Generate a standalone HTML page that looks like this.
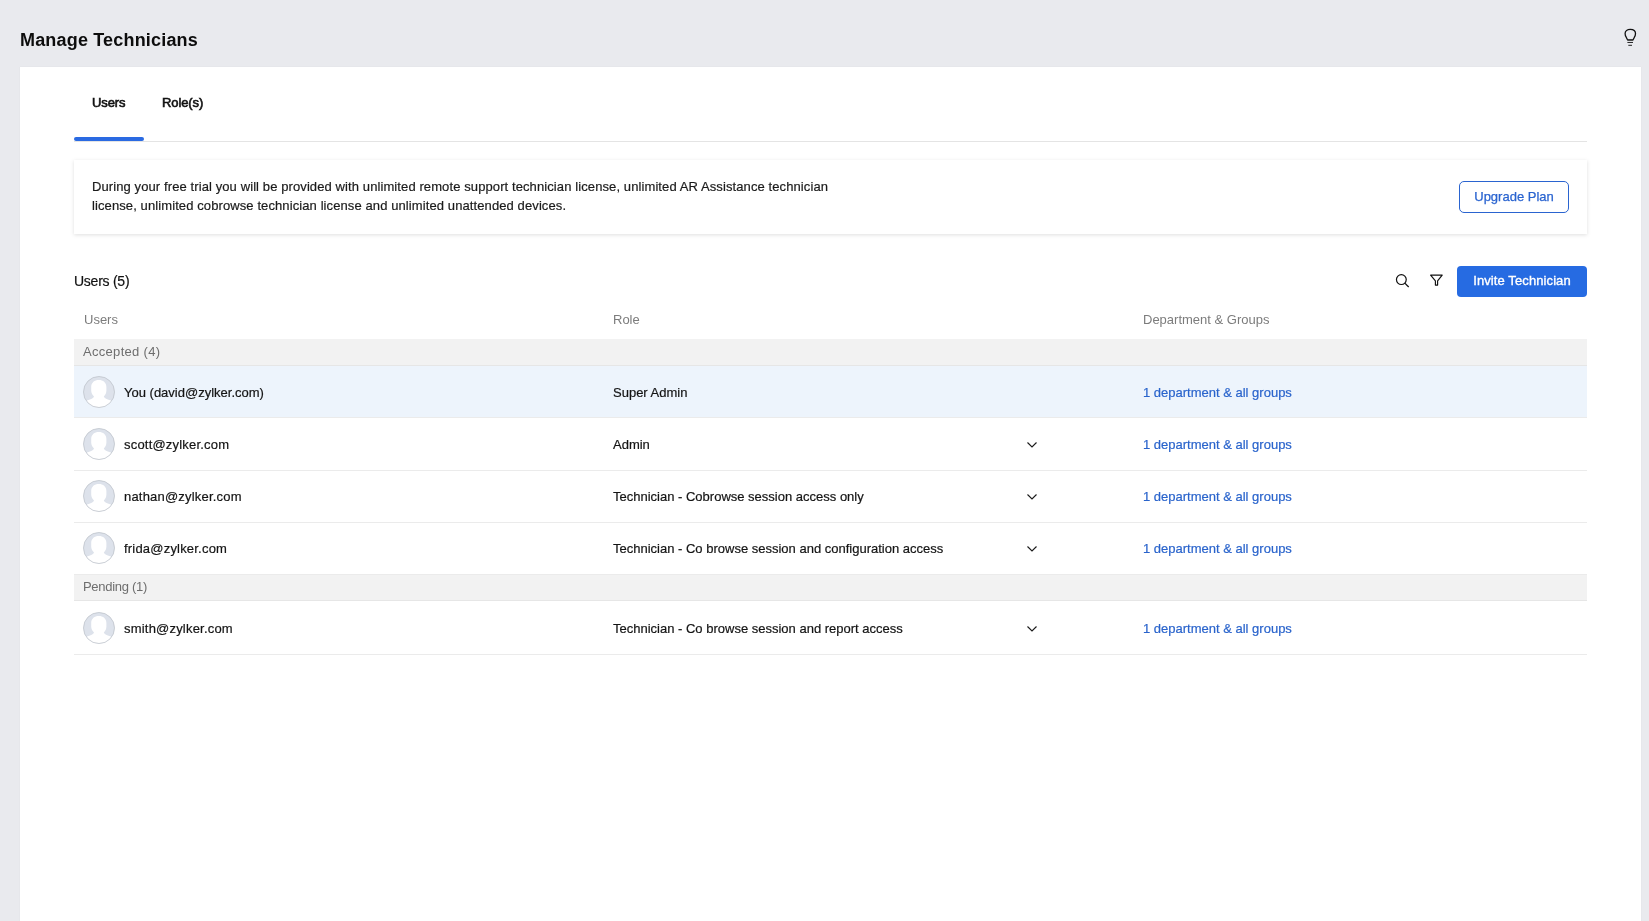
<!DOCTYPE html>
<html><head><meta charset="utf-8">
<style>
*{box-sizing:border-box;margin:0;padding:0}
html,body{width:1649px;height:921px;overflow:hidden}
body{background:#e9eaee;font-family:"Liberation Sans",sans-serif;color:#1b1b1b;position:relative}
.row .u,.row .r,.row .d,.info p{-webkit-text-stroke:0.2px currentColor}
.abs{position:absolute;white-space:nowrap}
.title{left:20px;top:30px;font-size:18px;font-weight:bold;color:#0d0d0d;line-height:20px;letter-spacing:0.18px}
.panel{position:absolute;left:20px;top:67px;width:1621px;height:870px;background:#fff;box-shadow:0 0 1px rgba(0,0,0,0.07)}
.tab{font-size:13px;line-height:16px;color:#111;letter-spacing:-0.1px;-webkit-text-stroke:0.6px #111}
.tabbar{left:74px;top:137px;width:70px;height:4px;border-radius:2px;background:#2a6ae2}
.tabline{left:74px;top:141px;width:1513px;height:1px;background:#e4e4e4}
.info{position:absolute;left:74px;top:160px;width:1513px;height:74px;background:#fff;box-shadow:0 1px 4px rgba(0,0,0,0.13)}
.info p{position:absolute;left:18px;top:17px;font-size:13px;line-height:19px;color:#1b1b1b;letter-spacing:0.1px}
.btn-out{position:absolute;left:1459px;top:181px;width:110px;height:32px;border:1px solid #2a64d0;border-radius:5px;color:#2a64d0;font-size:13px;line-height:30px;text-align:center;-webkit-text-stroke:0.25px #2a64d0}
.usersct{left:74px;top:273px;font-size:14px;line-height:16px;color:#111;-webkit-text-stroke:0.2px #111;letter-spacing:-0.25px}
.btn{position:absolute;left:1457px;top:266px;width:130px;height:31px;border-radius:4px;background:#266be2;color:#fff;font-size:13px;line-height:29px;text-align:center;letter-spacing:0.1px;-webkit-text-stroke:0.35px #fff}
.th{font-size:13px;line-height:16px;color:#7c7c7c;top:312px}
.band{position:absolute;left:74px;width:1513px;background:#f2f2f2;border-bottom:1px solid #e6e6e6}
.band span{position:absolute;left:9px;top:5px;font-size:13px;line-height:16px;color:#6e6e6e;letter-spacing:0.3px}
.row{position:absolute;left:74px;width:1513px;border-bottom:1px solid #ebebeb}
.row.sel{background:#edf4fc}
.row .av{position:absolute;left:9px;width:32px;height:32px}
.row .u{position:absolute;left:50px;font-size:13px;line-height:16px;color:#141414;letter-spacing:0.2px}
.row .r{position:absolute;left:539px;font-size:13px;line-height:16px;color:#141414}
.row .d{position:absolute;left:1069px;font-size:13px;line-height:16px;color:#2a64cc}
.row .ch{position:absolute;left:952px;width:12px;height:8px}
</style></head>
<body>
<div id="wrap" style="position:absolute;left:0;top:0;width:1649px;height:921px;will-change:transform">
<div class="abs title">Manage Technicians</div>
<svg class="abs" style="left:1620px;top:26px" width="22" height="24" viewBox="0 0 22 24">
<path d="M7.5 13.8 L6.2 11.2 C5.4 10 5.1 8.9 5.1 7.6 C5.1 4.9 7.4 3.4 10.3 3.4 C13.2 3.4 15.5 4.9 15.5 7.6 C15.5 8.9 15.2 10 14.4 11.2 L13.1 13.8 Z" fill="none" stroke="#111" stroke-width="1.3" stroke-linejoin="round"/>
<path d="M7.4 14.1 H13.2" stroke="#333" stroke-width="1.1"/>
<path d="M7.4 16.45 H13 M8.3 19.3 H12" stroke="#222" stroke-width="1.0"/>
</svg>
<div class="panel"></div>
<div class="abs tab" style="left:92px;top:95px">Users</div>
<div class="abs tab" style="left:162px;top:95px">Role(s)</div>
<div class="abs tabbar"></div>
<div class="abs tabline"></div>

<div class="info"><p>During your free trial you will be provided with unlimited remote support technician license, unlimited AR Assistance technician<br>license, unlimited cobrowse technician license and unlimited unattended devices.</p></div>
<div class="btn-out">Upgrade Plan</div>

<div class="abs usersct">Users (5)</div>
<svg class="abs" style="left:1392px;top:270px" width="20" height="20" viewBox="0 0 20 20">
<circle cx="9.35" cy="9.6" r="4.9" fill="none" stroke="#111" stroke-width="1.2"/>
<path d="M12.8 13.1 L16.7 17" stroke="#111" stroke-width="1.3"/>
</svg>
<svg class="abs" style="left:1426px;top:270px" width="20" height="20" viewBox="0 0 20 20">
<path d="M4.6 5.1 H16.2 L11.6 10.9 V15.1 H9.4 V10.9 Z" fill="none" stroke="#111" stroke-width="1.15" stroke-linejoin="round"/>
</svg>
<div class="btn">Invite Technician</div>

<div class="abs th" style="left:84px">Users</div>
<div class="abs th" style="left:613px">Role</div>
<div class="abs th" style="left:1143px">Department &amp; Groups</div>

<svg width="0" height="0" style="position:absolute"><defs><clipPath id="avc"><circle cx="16" cy="16" r="15.5"/></clipPath><symbol id="avt" viewBox="0 0 32 32"><circle cx="16" cy="16" r="15.5" fill="#dde2eb"/><path clip-path="url(#avc)" fill="#fff" d="M8.2 11 C8.2 6.5 11.5 3.9 15.8 3.9 C20.1 3.9 23.4 6.5 23.4 11 L23.4 14.5 C23.4 17 22.3 19 20.8 20.6 C21.4 22.6 25 23.8 29.5 25 L33 33 L-1 33 L2.5 25 C7 23.8 10.4 22.6 11 20.6 C9.5 19 8.2 17 8.2 14.5 Z"/><circle cx="16" cy="16" r="15.5" fill="none" stroke="#bfc4cc" stroke-width="0.8"/></symbol></defs></svg>
<div class="band" style="top:339px;height:27px"><span>Accepted (4)</span></div>
<div class="row sel" style="top:366px;height:52px"><svg class="av" style="top:10px" width="32" height="32" viewBox="0 0 32 32"><use href="#avt"/></svg><div class="u" style="top:19px;letter-spacing:0">You (david@zylker.com)</div><div class="r" style="top:19px">Super Admin</div><div class="d" style="top:19px">1 department &amp; all groups</div></div>
<div class="row" style="top:418px;height:53px"><svg class="av" style="top:10px" width="32" height="32" viewBox="0 0 32 32"><use href="#avt"/></svg><div class="u" style="top:19px">scott@zylker.com</div><div class="r" style="top:19px">Admin</div><svg class="ch" style="top:23px" width="12" height="8" viewBox="0 0 12 8"><path d="M1.5 1.5 L6 6 L10.5 1.5" fill="none" stroke="#1b1b1b" stroke-width="1.15"/></svg><div class="d" style="top:19px">1 department &amp; all groups</div></div>
<div class="row" style="top:471px;height:52px"><svg class="av" style="top:9px" width="32" height="32" viewBox="0 0 32 32"><use href="#avt"/></svg><div class="u" style="top:18px">nathan@zylker.com</div><div class="r" style="top:18px">Technician - Cobrowse session access only</div><svg class="ch" style="top:22px" width="12" height="8" viewBox="0 0 12 8"><path d="M1.5 1.5 L6 6 L10.5 1.5" fill="none" stroke="#1b1b1b" stroke-width="1.15"/></svg><div class="d" style="top:18px">1 department &amp; all groups</div></div>
<div class="row" style="top:523px;height:52px"><svg class="av" style="top:9px" width="32" height="32" viewBox="0 0 32 32"><use href="#avt"/></svg><div class="u" style="top:18px">frida@zylker.com</div><div class="r" style="top:18px">Technician - Co browse session and configuration access</div><svg class="ch" style="top:22px" width="12" height="8" viewBox="0 0 12 8"><path d="M1.5 1.5 L6 6 L10.5 1.5" fill="none" stroke="#1b1b1b" stroke-width="1.15"/></svg><div class="d" style="top:18px">1 department &amp; all groups</div></div>
<div class="band" style="top:575px;height:26px"><span style="top:4px;letter-spacing:-0.3px">Pending (1)</span></div>
<div class="row" style="top:601px;height:54px"><svg class="av" style="top:11px" width="32" height="32" viewBox="0 0 32 32"><use href="#avt"/></svg><div class="u" style="top:20px">smith@zylker.com</div><div class="r" style="top:20px">Technician - Co browse session and report access</div><svg class="ch" style="top:24px" width="12" height="8" viewBox="0 0 12 8"><path d="M1.5 1.5 L6 6 L10.5 1.5" fill="none" stroke="#1b1b1b" stroke-width="1.15"/></svg><div class="d" style="top:20px">1 department &amp; all groups</div></div>
</div></body></html>
